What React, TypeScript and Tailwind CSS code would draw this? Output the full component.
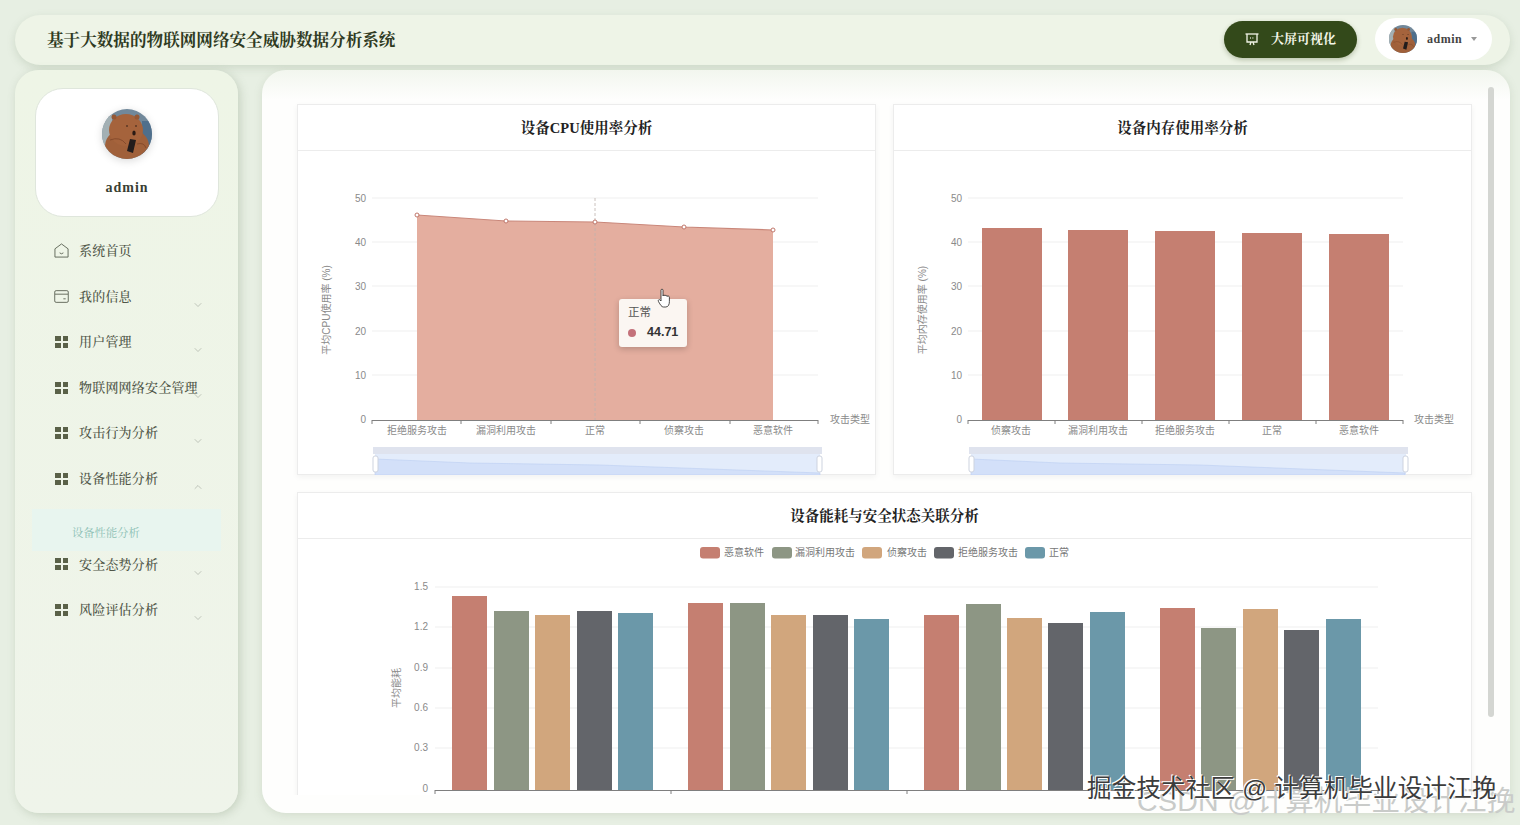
import { ChevronDown, ChevronUp } from "lucide-react";

const serif = "font-['Liberation_Serif','Noto_Serif_CJK_SC','Noto_Sans_CJK_SC',serif]";

function Bear({ size }: { size: number }) {
  return (
    <svg width={size} height={size} viewBox="0 0 50 50" className="block">
      <defs>
        <clipPath id="bearclip"><circle cx="25" cy="25" r="25" /></clipPath>
      </defs>
      <g clipPath="url(#bearclip)">
        <rect width="50" height="50" fill="#71889a" />
        <rect x="0" y="0" width="10" height="50" fill="#a3b0b4" />
        <rect x="40" y="12" width="10" height="38" fill="#4f6f8c" />
        <ellipse cx="25" cy="37" rx="22" ry="18" fill="#a0603a" />
        <ellipse cx="24" cy="21" rx="17" ry="16" fill="#a5633c" />
        <circle cx="12" cy="8" r="2.5" fill="#955835" />
        <circle cx="35" cy="8" r="2.5" fill="#955835" />
        <ellipse cx="32" cy="24" rx="1.7" ry="2.6" fill="#2a1a14" />
        <circle cx="25" cy="17" r="0.8" fill="#2a1a14" />
        <circle cx="34" cy="17" r="0.8" fill="#2a1a14" />
        <path d="M28 30 L34 31 L31 44 L25 42 Z" fill="#221c1c" />
        <path d="M8 31 Q18 27 24 35" fill="none" stroke="#7d4528" strokeWidth="0.8" />
        <path d="M35 35 Q42 33 44 39" fill="none" stroke="#7d4528" strokeWidth="0.8" />
      </g>
    </svg>
  );
}

function HomeIcon() {
  return (
    <svg width="15" height="15" viewBox="0 0 16 16" fill="none" stroke="#5f6658" strokeWidth="1" className="-ml-px">
      <path d="M1 6.2 L8 1 L15 6.2 V15 H1 Z" strokeLinejoin="round" />
      <path d="M6 10.5 Q8 12.5 10 10.5" />
    </svg>
  );
}
function CardIcon() {
  return (
    <svg width="15" height="13" viewBox="0 0 16 14" fill="none" stroke="#5f6658" strokeWidth="1" className="-ml-px">
      <rect x="0.7" y="0.7" width="14.6" height="12.6" rx="1.5" />
      <path d="M1 4.5 H15" />
      <path d="M10 9.5 H12.5" />
    </svg>
  );
}
function GridIcon() {
  return (
    <div className="grid grid-cols-2 gap-[2px] w-[13px]">
      <div className="h-[5px] bg-[#5a6148]" />
      <div className="h-[5px] bg-[#5a6148]" />
      <div className="h-[5px] bg-[#5a6148]" />
      <div className="h-[5px] bg-[#5a6148]" />
    </div>
  );
}

function MenuRow({ icon, label, arrow }: { icon: "home" | "card" | "grid"; label: string; arrow?: "down" | "up" }) {
  return (
    <div className="relative flex h-[45.6px] items-center pl-[39px]">
      <div className="flex w-[25px] items-center pl-px">
        {icon === "home" && <HomeIcon />}
        {icon === "card" && <CardIcon />}
        {icon === "grid" && <GridIcon />}
      </div>
      <span className={`text-[13px] tracking-[0.2px] text-[#4f5547] font-medium whitespace-nowrap ${serif}`}>{label}</span>
      {arrow === "down" && <ChevronDown size={12} strokeWidth={1} className="absolute left-[177px] top-[25px] text-[#8f958a]" />}
      {arrow === "up" && <ChevronUp size={12} strokeWidth={1} className="absolute left-[177px] top-[25px] text-[#8f958a]" />}
    </div>
  );
}

const T = ({ x, y, c, s = 10, a = "middle", f = "#8a8a8a" }: { x: number; y: number; c: string; s?: number; a?: "middle" | "end" | "start"; f?: string }) => (
  <text x={x} y={y + 1} fontSize={s} textAnchor={a} fill={f} dominantBaseline="middle">{c}</text>
);

function Axes({ x0, x1, ticks, lx }: { x0: number; x1: number; ticks: number[]; lx: number }) {
  const ys: [number, string][] = [[198, "50"], [242, "40"], [286, "30"], [331, "20"], [375, "10"]];
  return (
    <g>
      {ys.map(([y, l]) => (
        <g key={l}>
          <line x1={x0} x2={x1} y1={y} y2={y} stroke="#efefef" />
          <T x={lx} y={y} c={l} a="end" />
        </g>
      ))}
      <T x={lx} y={419} c="0" a="end" />
      <line x1={x0} x2={x1} y1={420.5} y2={420.5} stroke="#7f7f7f" />
      {ticks.map((t) => (
        <line key={t} x1={t} x2={t} y1={420} y2={424} stroke="#7f7f7f" />
      ))}
    </g>
  );
}

function Slider({ x0, x1, line }: { x0: number; x1: number; line: string }) {
  return (
    <g>
      <rect x={x0} y={447} width={x1 - x0} height={7} fill="#dfe3ee" />
      <rect x={x0 + 2} y={454} width={x1 - x0 - 4} height={21} fill="#e3ecfb" />
      <path d={line} fill="#d3e0f9" stroke="#bccff2" strokeWidth="0.6" />
      <rect x={x0} y={456} width={5} height={16} rx={2} fill="#fff" stroke="#cdd3df" />
      <rect x={x1 - 5} y={456} width={5} height={16} rx={2} fill="#fff" stroke="#cdd3df" />
    </g>
  );
}

function CpuChart() {
  const pts: [number, number][] = [[417, 215], [506, 221], [595, 222], [684, 227], [773, 230]];
  const labels = ["拒绝服务攻击", "漏洞利用攻击", "正常", "侦察攻击", "恶意软件"];
  return (
    <svg viewBox="298 151 577 324" width="577" height="324" className="block">
      <Axes x0={372} x1={818} ticks={[372, 461, 551, 640, 730, 818]} lx={366} />
      <path d={`M417 420 L${pts.map((p) => p.join(" ")).join(" L")} L773 420 Z`} fill="#e4ae9f" />
      <path d={`M${pts.map((p) => p.join(" ")).join(" L")}`} fill="none" stroke="#c9877a" strokeWidth="1.2" />
      <line x1="595" x2="595" y1="198" y2="420" stroke="#bdb3ad" strokeDasharray="3 2" strokeWidth="0.8" />
      {pts.map(([x, y]) => (
        <circle key={x} cx={x} cy={y} r={2} fill="#fff" stroke="#c0766a" />
      ))}
      {labels.map((l, i) => (
        <T key={l} x={417 + i * 89} y={430} c={l} />
      ))}
      <T x={830} y={419} c="攻击类型" a="start" />
      <text transform="translate(327 310) rotate(-90)" fontSize="10" textAnchor="middle" dominantBaseline="middle" fill="#8a8a8a">平均CPU使用率 (%)</text>
      <Slider x0={373} x1={822} line="M375 475 V459 L470 463 L600 465 L820 473 V475 Z" />
    </svg>
  );
}

function MemChart() {
  const bars: [number, number][] = [[982, 228], [1068, 230], [1155, 231], [1242, 233], [1329, 234]];
  const labels = ["侦察攻击", "漏洞利用攻击", "拒绝服务攻击", "正常", "恶意软件"];
  return (
    <svg viewBox="894 151 577 324" width="577" height="324" className="block">
      <Axes x0={968} x1={1403} ticks={[968, 1055, 1142, 1229, 1316, 1403]} lx={962} />
      {bars.map(([x, y]) => (
        <rect key={x} x={x} y={y} width={60} height={420 - y} fill="#c57f71" />
      ))}
      {labels.map((l, i) => (
        <T key={l} x={1011 + i * 87} y={430} c={l} />
      ))}
      <T x={1414} y={419} c="攻击类型" a="start" />
      <text transform="translate(923 310) rotate(-90)" fontSize="10" textAnchor="middle" dominantBaseline="middle" fill="#8a8a8a">平均内存使用率 (%)</text>
      <Slider x0={969} x1={1408} line="M971 475 V459 L1060 463 L1200 465 L1405 473 V475 Z" />
    </svg>
  );
}

function EnergyChart() {
  const colors = ["#c57f71", "#8d9684", "#d1a67d", "#63656a", "#6b98a9"];
  const groups: { xs: number[]; tops: number[] }[] = [
    { xs: [452, 494, 535, 577, 618], tops: [596, 611, 615, 611, 613] },
    { xs: [688, 730, 771, 813, 854], tops: [603, 603, 615, 615, 619] },
    { xs: [924, 966, 1007, 1048, 1090], tops: [615, 604, 618, 623, 612] },
    { xs: [1160, 1201, 1243, 1284, 1326], tops: [608, 628, 609, 630, 619] },
  ];
  const grid: [number, string][] = [[587, "1.5"], [627, "1.2"], [668, "0.9"], [708, "0.6"], [748, "0.3"]];
  const legend: [number, number, string][] = [
    [700, 724, "恶意软件"],
    [772, 795, "漏洞利用攻击"],
    [862, 887, "侦察攻击"],
    [934, 958, "拒绝服务攻击"],
    [1025, 1049, "正常"],
  ];
  return (
    <svg viewBox="298 539 1173 270" width="1173" height="270" className="block">
      {grid.map(([y, l]) => (
        <g key={l}>
          <line x1={435} x2={1378} y1={y} y2={y} stroke="#efefef" />
          <T x={428} y={y - 1} c={l} a="end" />
        </g>
      ))}
      <T x={428} y={788} c="0" a="end" />
      {groups.map((g) =>
        g.xs.map((x, i) => (
          <rect key={x} x={x} y={g.tops[i]} width={35} height={790 - g.tops[i]} fill={colors[i]} />
        ))
      )}
      <line x1={435} x2={1378} y1={790.5} y2={790.5} stroke="#7f7f7f" />
      {[435, 671, 907, 1143, 1378].map((t) => (
        <line key={t} x1={t} x2={t} y1={790} y2={794} stroke="#7f7f7f" />
      ))}
      {legend.map(([rx, tx, l], i) => (
        <g key={l}>
          <rect x={rx} y={547} width={20} height={11.5} rx={3} fill={colors[i]} />
          <T x={tx} y={552} c={l} a="start" f="#777" />
        </g>
      ))}
      <text transform="translate(397 688) rotate(-90)" fontSize="10" textAnchor="middle" dominantBaseline="middle" fill="#8a8a8a">平均能耗</text>
    </svg>
  );
}

function Card({ title, children, className }: { title: string; children: React.ReactNode; className?: string }) {
  return (
    <div className={`border border-[#ececec] bg-white shadow-[0_2px_6px_rgba(0,0,0,0.05)] ${className ?? ""}`}>
      <div className={`flex h-[46px] items-center justify-center border-b border-[#ececec] pt-[2px] text-[14.5px] font-bold text-[#222] ${serif}`}>{title}</div>
      {children}
    </div>
  );
}

function Cursor() {
  return (
    <svg width="14" height="20" viewBox="0 0 14 20" className="absolute left-[359px] top-[183px]">
      <path d="M4 10 V2.2 C4 .8 6 .8 6 2.2 V8 C6 6.8 8 6.8 8 8 C8 7 10 7 10 8.5 C10.2 7.6 12.4 7.8 12.4 9.4 V13.5 C12.4 16 11.5 19 8.8 19 H6.5 C4.5 19 3.5 17 1.5 13.6 C.6 12.2 2.2 11 3.2 12 L4 13 Z" fill="#fff" stroke="#222" strokeWidth="0.8" />
    </svg>
  );
}

export default function App() {
  return (
    <div className="relative h-[825px] w-[1520px] overflow-hidden bg-[#e7efe3] pl-[15px] pr-[10px] pt-[15px] font-['Liberation_Sans','Noto_Sans_CJK_SC',sans-serif]">
      <header className="flex h-[50px] items-center rounded-[25px] bg-[#eef4e7] pl-[32px] pr-[18px] shadow-[0_3px_8px_rgba(120,140,110,0.22)]">
        <h1 className={`pt-[3px] text-[16.6px] font-bold text-[#2f3a22] ${serif}`}>基于大数据的物联网网络安全威胁数据分析系统</h1>
        <div className="mb-[2px] ml-auto flex items-center gap-[18px]">
          <button className="flex h-[37px] w-[133px] items-center rounded-[19px] bg-[#33491a] pl-[21px] shadow-[0_2px_5px_rgba(60,80,30,0.3)]">
            <svg width="14" height="13" viewBox="0 0 14 13" fill="none" stroke="#f1f4e6" strokeWidth="1.3">
              <path d="M0.5 1 H13.5" />
              <path d="M2 1 V9 H12 V1" />
              <path d="M5 12 L6 9 M9 12 L8 9" />
              <path d="M5 5 H5.8 M7.5 5 H8.3" />
            </svg>
            <span className={`ml-[12px] text-[13px] font-bold text-[#f4f6e8] whitespace-nowrap ${serif}`}>大屏可视化</span>
          </button>
          <div className="flex h-[42px] w-[117px] items-center rounded-[21px] bg-white pl-[14px]">
            <Bear size={28} />
            <span className={`ml-[10px] text-[12px] font-bold tracking-[0.5px] text-[#444] ${serif}`}>admin</span>
            <span className="ml-[9px] h-0 w-0 border-x-[3.5px] border-t-[4px] border-x-transparent border-t-[#999]" />
          </div>
        </div>
      </header>

      <div className="mt-[5px] flex h-[743px] gap-[24px]">
        <aside className="w-[223px] shrink-0 rounded-[24px] bg-gradient-to-b from-[#eef5e6] to-[#eff4ea] pt-[18px] shadow-[2px_2px_10px_rgba(120,140,110,0.3)]">
          <div className="mx-[20px] flex h-[129px] w-[184px] flex-col items-center rounded-[28px] border border-[#dfe6dc] bg-white pt-[20px]">
            <div className="rounded-full shadow-[0_2px_8px_rgba(0,0,0,0.15)]">
              <Bear size={50} />
            </div>
            <span className={`mt-[18px] text-[14px] font-bold tracking-[1px] text-[#3a3f34] ${serif}`}>admin</span>
          </div>
          <nav className="mt-[11px]">
            <MenuRow icon="home" label="系统首页" />
            <MenuRow icon="card" label="我的信息" arrow="down" />
            <MenuRow icon="grid" label="用户管理" arrow="down" />
            <MenuRow icon="grid" label="物联网网络安全管理" arrow="down" />
            <MenuRow icon="grid" label="攻击行为分析" arrow="down" />
            <MenuRow icon="grid" label="设备性能分析" arrow="up" />
            <div className={`mx-[17px] -mb-[9px] mt-[7px] flex h-[42px] items-center bg-[#e8f5ef] pl-[40px] pt-[8px] text-[11.3px] text-[#8cc0b4] ${serif}`}>设备性能分析</div>
            <MenuRow icon="grid" label="安全态势分析" arrow="down" />
            <MenuRow icon="grid" label="风险评估分析" arrow="down" />
          </nav>
        </aside>

        <main className="relative w-[1248px] rounded-[24px] bg-gradient-to-b from-[#f2f6ee] to-[#fefefd] to-[4%] shadow-[0_2px_8px_rgba(120,140,110,0.18)]">
          <div className="h-[725px] overflow-hidden pl-[35px] pr-[38px] pt-[34px]">
            <div className="grid grid-cols-2 gap-x-[17px]">
              <Card title="设备CPU使用率分析" className="relative h-[371px]">
                <CpuChart />
                <div className="absolute left-[321px] top-[194px] flex h-[48px] w-[68px] flex-col rounded-[3px] bg-[#fbf6f2] pl-[9px] pt-[6px] shadow-[0_2px_6px_rgba(0,0,0,0.2)]">
                  <span className="text-[11.5px] leading-[15px] text-[#555]">正常</span>
                  <div className="mt-[5px] flex items-center">
                    <span className="h-[8px] w-[8px] rounded-full bg-[#c4717a]" />
                    <span className="ml-[11px] text-[12.5px] font-bold leading-[15px] text-[#333]">44.71</span>
                  </div>
                </div>
                <Cursor />
              </Card>
              <Card title="设备内存使用率分析" className="h-[371px]">
                <MemChart />
              </Card>
            </div>
            <Card title="设备能耗与安全状态关联分析" className="mt-[17px] h-[318px]">
              <EnergyChart />
            </Card>
          </div>
          <div className="absolute left-[1226px] top-[17px] h-[630px] w-[6px] rounded-[3px] bg-[#d4d6d2]" />
        </main>
      </div>

      <div className="pointer-events-none absolute left-[1137px] top-[785px] whitespace-nowrap text-[28.5px] leading-[32px] tracking-[0.3px] text-[#c9cbc9]">CSDN @计算机毕业设计江挽</div>
      <div className="pointer-events-none absolute left-[1087px] top-[773px] whitespace-nowrap text-[24.5px] leading-[32px] tracking-[0.2px] text-[#3c3c3c] [text-shadow:1px_1px_0_#fff,-1px_-1px_0_#fff]">掘金技术社区 @ 计算机毕业设计江挽</div>
    </div>
  );
}
